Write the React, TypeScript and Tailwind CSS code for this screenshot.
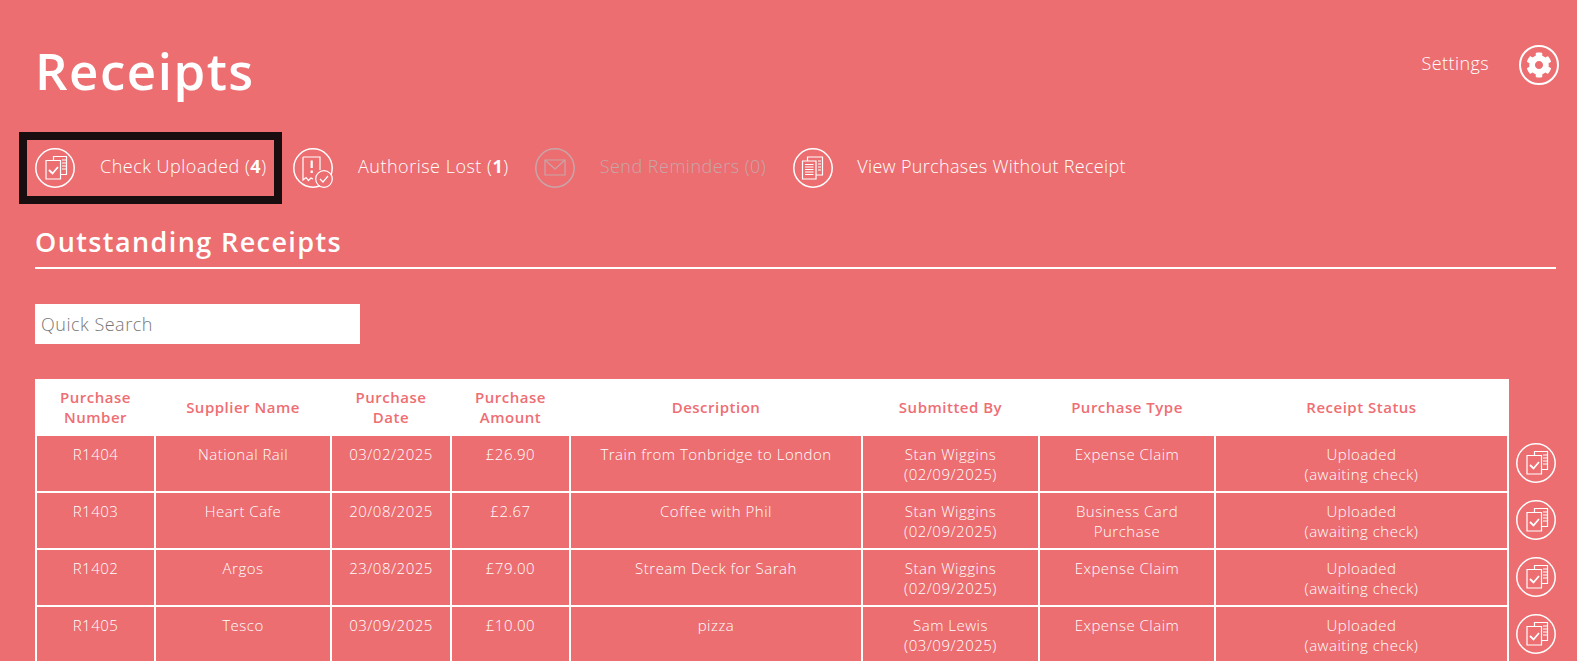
import React from "react";
import { FaCog } from "react-icons/fa";

const Circle = ({ children, className = "" }: { children: React.ReactNode; className?: string }) => (
  <svg viewBox="0 0 40 40" className={`w-10 h-10 shrink-0 ${className}`} fill="none" stroke="currentColor" strokeWidth="1.2">
    <circle cx="20" cy="20" r="19.2" strokeWidth="1.5" />
    {children}
  </svg>
);

const CheckDocs = () => (
  <Circle>
    <path d="M18.5 12.5V8.5H31.5V26.5H25.5" />
    <path d="M27 12H31M27 15H31M27 18H31M27 21H31" strokeWidth="1" />
    <path d="M11 12.5H25.5V31H11Z" />
    <path d="M14 22L17.5 25.5L23 19" strokeWidth="1.8" />
  </Circle>
);

const Receipt = () => (
  <Circle>
    <path d="M10 9H27V22M10 9V32L13 29.5L15.5 32.5L18 30L20 31" />
    <path d="M18.7 12.5V20M18.7 22.5V25" strokeWidth="2.2" />
    <circle cx="31" cy="31" r="8.3" fill="#ec6e71" />
    <path d="M27 31L30 34L35 28" />
  </Circle>
);

const Mail = () => (
  <Circle>
    <path d="M10 12H30V27H10Z" />
    <path d="M10 12L20 21L30 12" />
  </Circle>
);

const Docs = () => (
  <Circle>
    <path d="M14.5 13V9H29.5V27H23" />
    <path d="M25 13H28M25 16H28M25 19H28M25 22H28" strokeWidth="1" />
    <path d="M9.5 13H23V31H9.5Z" />
    <path d="M12 16.5H20.5M12 19H20.5M12 21.5H20.5M12 24H20.5M12 26.5H20.5" strokeWidth="1.1" />
  </Circle>
);

const rows: string[][] = [
  ["R1404", "National Rail", "03/02/2025", "£26.90", "Train from Tonbridge to London", "Stan Wiggins|(02/09/2025)", "Expense Claim"],
  ["R1403", "Heart Cafe", "20/08/2025", "£2.67", "Coffee with Phil", "Stan Wiggins|(02/09/2025)", "Business Card|Purchase"],
  ["R1402", "Argos", "23/08/2025", "£79.00", "Stream Deck for Sarah", "Stan Wiggins|(02/09/2025)", "Expense Claim"],
  ["R1405", "Tesco", "03/09/2025", "£10.00", "pizza", "Sam Lewis|(03/09/2025)", "Expense Claim"],
];

const headers = ["Purchase|Number", "Supplier Name", "Purchase|Date", "Purchase|Amount", "Description", "Submitted By", "Purchase Type", "Receipt Status"];

const Lines = ({ text }: { text: string }) => (
  <>
    {text.split("|").map((l) => (
      <div key={l}>{l}</div>
    ))}
  </>
);

export default function App() {
  return (
    <div className="h-screen overflow-hidden bg-[#ec6e71] text-white font-['Open_Sans',sans-serif] tracking-[0.5px] pl-[35px] pr-[21px]">
      <div className="flex justify-between items-start h-[132px]">
        <h1 className="text-[51px] leading-[76px] font-semibold tracking-[1.5px] mt-[32px]">Receipts</h1>
        <div className="flex items-center gap-[30px] mt-[45px] mr-[-3px]">
          <span className="text-[18px] font-light tracking-[0.4px] pb-[3px]">Settings</span>
          <span className="w-10 h-10 rounded-full border-2 border-white flex items-center justify-center">
            <FaCog className="w-[26px] h-[26px]" />
          </span>
        </div>
      </div>

      <div className="flex items-center text-[18px] font-light h-[72px]">
        <div className="flex items-center gap-[25px] ml-[-16px] pl-4 pr-[10px] h-[72px] w-[263px] outline-[8px] outline-[#1a0d0f] outline-offset-[-8px]">
          <CheckDocs />
          <span className="whitespace-nowrap pb-[3px]">Check Uploaded (<b className="font-bold">4</b>)</span>
        </div>
        <div className="flex items-center gap-[25px] ml-[11px]">
          <Receipt />
          <span className="whitespace-nowrap pb-[3px]">Authorise Lost (<b className="font-bold">1</b>)</span>
        </div>
        <div className="flex items-center gap-[25px] ml-[26px] text-[#c9a5a8]">
          <Mail />
          <span className="whitespace-nowrap pb-[3px]">Send Reminders (0)</span>
        </div>
        <div className="flex items-center gap-[24px] ml-[27px]">
          <Docs />
          <span className="whitespace-nowrap pb-[3px] tracking-[0.33px]">View Purchases Without Receipt</span>
        </div>
      </div>

      <h2 className="text-[27px] leading-[36px] font-semibold tracking-[1.4px] mt-[20px] pb-[7px] border-b-2 border-white">Outstanding Receipts</h2>

      <input
        placeholder="Quick Search"
        className="block mt-[35px] w-[325px] h-10 bg-white px-[6px] text-[18px] font-light text-[#555] placeholder:text-[#777] outline-none"
      />

      <div className="flex items-start mt-[35px]">
        <table className="w-[1472px] table-fixed border-collapse text-[15px] leading-[20px] font-light text-center shrink-0">
          <colgroup>
            <col className="w-[119px]" />
            <col className="w-[176px]" />
            <col className="w-[120px]" />
            <col className="w-[119px]" />
            <col className="w-[292px]" />
            <col className="w-[177px]" />
            <col className="w-[176px]" />
            <col className="w-[293px]" />
          </colgroup>
          <thead>
            <tr className="bg-white text-[#ee6e73] h-[55px]">
              {headers.map((h) => (
                <th key={h} className="font-semibold align-middle border-2 border-white p-0 pb-[2px]">
                  <Lines text={h} />
                </th>
              ))}
            </tr>
          </thead>
          <tbody>
            {rows.map((r) => (
              <tr key={r[0]} className="h-[57px]">
                {r.map((c, i) => (
                  <td key={i} className="border-2 border-white align-top pt-2 pb-0">
                    <Lines text={c} />
                  </td>
                ))}
                <td className="border-2 border-white align-top pt-2">
                  <div>Uploaded</div>
                  <div>(awaiting check)</div>
                </td>
              </tr>
            ))}
          </tbody>
        </table>
        <div className="flex flex-col gap-[17px] mt-[64px] ml-[7px] shrink-0">
          {rows.map((r) => (
            <CheckDocs key={r[0]} />
          ))}
        </div>
      </div>
    </div>
  );
}
